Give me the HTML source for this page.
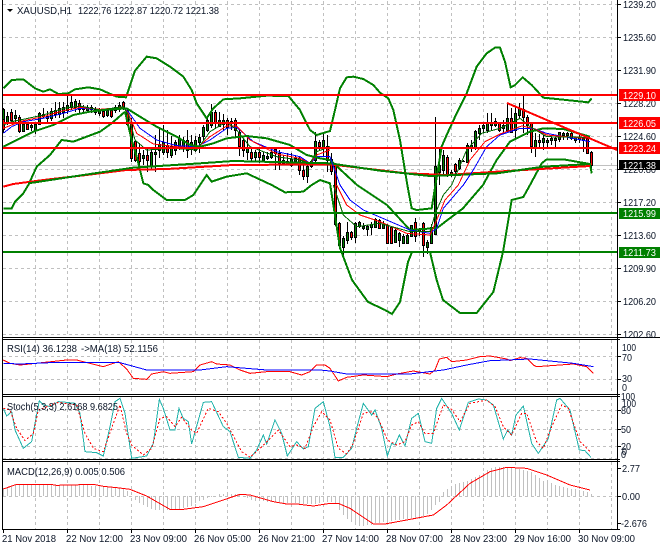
<!DOCTYPE html>
<html><head><meta charset="utf-8"><style>
html,body{margin:0;padding:0;background:#fff;width:660px;height:550px;overflow:hidden}
svg{display:block;position:absolute;left:0;top:0}
text{font-family:"Liberation Sans",sans-serif;font-size:10.5px;fill:#0a1426}
.lg{fill:none;stroke:#008000;stroke-width:2;vector-effect:non-scaling-stroke;shape-rendering:crispEdges}
.lr{fill:none;stroke:#f00;stroke-width:2;vector-effect:non-scaling-stroke;shape-rendering:crispEdges}
.t1{fill:none;stroke-width:1;vector-effect:non-scaling-stroke;shape-rendering:crispEdges}
</style></head><body>
<svg width="660" height="550" viewBox="0 0 660 550">
<rect width="660" height="550" fill="#fff"/>
<!-- grid -->
<path fill="none" stroke="#c0c0c0" stroke-dasharray="3 3" shape-rendering="crispEdges" d="M35.5 1V337M67.5 1V337M99.5 1V337M131.5 1V337M163.5 1V337M195.5 1V337M227.5 1V337M259.5 1V337M291.5 1V337M323.5 1V337M355.5 1V337M387.5 1V337M419.5 1V337M451.5 1V337M483.5 1V337M515.5 1V337M547.5 1V337M579.5 1V337M611.5 1V337
M35.5 340V394M67.5 340V394M99.5 340V394M131.5 340V394M163.5 340V394M195.5 340V394M227.5 340V394M259.5 340V394M291.5 340V394M323.5 340V394M355.5 340V394M387.5 340V394M419.5 340V394M451.5 340V394M483.5 340V394M515.5 340V394M547.5 340V394M579.5 340V394M611.5 340V394
M35.5 397V459M67.5 397V459M99.5 397V459M131.5 397V459M163.5 397V459M195.5 397V459M227.5 397V459M259.5 397V459M291.5 397V459M323.5 397V459M355.5 397V459M387.5 397V459M419.5 397V459M451.5 397V459M483.5 397V459M515.5 397V459M547.5 397V459M579.5 397V459M611.5 397V459
M35.5 462V529M67.5 462V529M99.5 462V529M131.5 462V529M163.5 462V529M195.5 462V529M227.5 462V529M259.5 462V529M291.5 462V529M323.5 462V529M355.5 462V529M387.5 462V529M419.5 462V529M451.5 462V529M483.5 462V529M515.5 462V529M547.5 462V529M579.5 462V529M611.5 462V529
M3 4.5H617M3 37.5H617M3 70.5H617M3 103.5H617M3 136.5H617M3 169.5H617M3 202.5H617M3 235.5H617M3 268.5H617M3 301.5H617M3 334.5H617M3 356.5H617M3 379.5H617M3 410.5H617M3 429.5H617M3 446.5H617M3 458.5H617M3 496.5H617"/>
<path d="M3 165.5H617" stroke="#c0c0c0" shape-rendering="crispEdges"/>
<!-- macd histogram -->
<path stroke="#c0c0c0" shape-rendering="crispEdges" fill="none" d="M3.5 496V488M7.5 496V487M11.5 496V486M15.5 496V485M19.5 496V485M23.5 496V485M27.5 496V485M31.5 496V485M35.5 496V485M39.5 496V485M43.5 496V485M47.5 496V485M51.5 496V485M55.5 496V485M59.5 496V485M63.5 496V485M67.5 496V485M71.5 496V485M75.5 496V485M79.5 496V485M83.5 496V485M87.5 496V485M91.5 496V486M95.5 496V486M99.5 496V486M103.5 496V487M107.5 496V487M111.5 496V487M115.5 496V488M119.5 496V488M123.5 496V489M127.5 496V491M131.5 496V497M135.5 496V500M139.5 496V503M143.5 496V505M147.5 496V507M151.5 496V509M155.5 496V510M159.5 496V510M163.5 496V510M167.5 496V510M171.5 496V510M175.5 496V510M179.5 496V509M183.5 496V508M187.5 496V507M191.5 496V506M195.5 496V503M199.5 496V501M203.5 496V500M207.5 496V498M211.5 496V497M219.5 496V494M223.5 496V494M227.5 496V494M231.5 496V494M235.5 496V494M239.5 496V495M243.5 496V497M247.5 496V498M251.5 496V500M255.5 496V501M259.5 496V501M263.5 496V501M267.5 496V502M271.5 496V502M275.5 496V502M279.5 496V502M283.5 496V503M287.5 496V503M291.5 496V503M295.5 496V503M299.5 496V504M303.5 496V504M307.5 496V504M311.5 496V504M315.5 496V504M319.5 496V503M323.5 496V502M327.5 496V502M331.5 496V502M335.5 496V503M339.5 496V510M343.5 496V515M347.5 496V519M351.5 496V522M355.5 496V525M359.5 496V526M363.5 496V526M367.5 496V525M371.5 496V525M375.5 496V523M379.5 496V523M383.5 496V522M387.5 496V522M391.5 496V521M395.5 496V520M399.5 496V520M403.5 496V519M407.5 496V519M411.5 496V518M415.5 496V518M419.5 496V517M423.5 496V516M427.5 496V514M431.5 496V510M435.5 496V505M439.5 496V502M443.5 496V492M447.5 496V489M451.5 496V486M455.5 496V484M459.5 496V483M463.5 496V482M467.5 496V481M471.5 496V479M475.5 496V477M479.5 496V475M483.5 496V473M487.5 496V470M491.5 496V468M495.5 496V467M499.5 496V467M503.5 496V467M507.5 496V467M511.5 496V467M515.5 496V468M519.5 496V469M523.5 496V470M527.5 496V471M531.5 496V472M535.5 496V475M539.5 496V478M543.5 496V481M547.5 496V482M551.5 496V483M555.5 496V485M559.5 496V486M563.5 496V487M567.5 496V488M571.5 496V489M575.5 496V489M579.5 496V490M583.5 496V491M587.5 496V492M591.5 496V494"/>
<!-- candle wicks -->
<path stroke="#000" fill="none" shape-rendering="crispEdges" d="M3.5 108V133M7.5 112V125M11.5 109V122M15.5 110V122M19.5 115V133M23.5 122V132M27.5 122V130M31.5 124V131M35.5 122V134M39.5 112V125M43.5 108V118M47.5 111V122M51.5 108V121M55.5 102V118M59.5 102V118M63.5 102V118M67.5 96V114M71.5 96V110M75.5 99V112M79.5 100V114M83.5 105V112M87.5 105V113M91.5 105V113M95.5 107V115M99.5 108V116M103.5 110V118M107.5 108V117M111.5 108V118M115.5 105V113M119.5 102V112M123.5 101V110M127.5 108V126M131.5 118V162M135.5 140V162M139.5 143V165M143.5 150V165M147.5 148V172M151.5 148V170M155.5 135V172M159.5 128V158M163.5 125V155M167.5 130V158M171.5 136V158M175.5 140V155M179.5 135V150M183.5 137V152M187.5 130V158M191.5 135V155M195.5 136V152M199.5 134V153M203.5 125V140M207.5 118V132M211.5 104V128M215.5 110V128M219.5 112V127M223.5 114V130M227.5 118V135M231.5 118V130M235.5 118V138M239.5 130V156M243.5 138V157M247.5 135V160M251.5 148V162M255.5 150V162M259.5 147V163M263.5 152V162M267.5 152V160M271.5 150V159M275.5 148V170M279.5 150V170M283.5 155V165M287.5 153V165M291.5 153V167M295.5 155V163M299.5 157V175M303.5 163V180M307.5 165V183M311.5 160V168M315.5 132V163M319.5 140V150M323.5 132V157M327.5 135V172M331.5 153V175M335.5 163V226M339.5 222V246M343.5 236V256M347.5 222V244M351.5 231V240M355.5 222V243M359.5 221V228M363.5 223V230M367.5 225V236M371.5 222V235M375.5 218V227M379.5 219V229M383.5 221V229M387.5 224V244M391.5 226V244M395.5 227V242M399.5 232V247M403.5 234V244M407.5 234V243M411.5 225V237M415.5 218V242M419.5 228V236M423.5 222V257M427.5 240V254M431.5 224V244M435.5 117V234M439.5 148V185M443.5 150V175M447.5 155V177M451.5 170V177M455.5 163V175M459.5 158V170M463.5 160V162M467.5 143V163M471.5 140V152M475.5 130V150M479.5 125V140M483.5 122V133M487.5 113V133M491.5 113V130M495.5 118V127M499.5 122V132M503.5 120V133M507.5 103V132M511.5 108V133M515.5 107V138M519.5 103V118M523.5 96V133M527.5 115V135M531.5 123V153M535.5 133V157M539.5 134V148M543.5 135V150M547.5 138V148M551.5 137V145M555.5 137V147M559.5 132V142M563.5 132V140M567.5 132V140M571.5 132V140M575.5 137V143M579.5 135V143M583.5 137V152M587.5 137V154M591.5 151V173"/>
<!-- green bodies -->
<path stroke="#000" fill="#008000" shape-rendering="crispEdges" d="M2.5 109.5h2v10h-2zM6.5 116.5h2v6h-2zM14.5 115.5h2v3h-2zM22.5 124.5h2v7h-2zM30.5 125.5h2v2h-2zM34.5 124.5h2v6h-2zM38.5 113.5h2v11h-2zM42.5 114.5h2v2h-2zM50.5 111.5h2v7h-2zM58.5 108.5h2v6h-2zM62.5 107.5h2v5h-2zM66.5 105.5h2v5h-2zM70.5 102.5h2v5h-2zM74.5 101.5h2v6h-2zM82.5 107.5h2v2h-2zM86.5 107.5h2v3h-2zM98.5 110.5h2v3h-2zM106.5 110.5h2v5h-2zM114.5 107.5h2v3h-2zM118.5 105.5h2v4h-2zM142.5 155.5h2v3h-2zM150.5 152.5h2v14h-2zM154.5 152.5h2v2h-2zM158.5 144.5h2v6h-2zM162.5 142.5h2v10h-2zM170.5 146.5h2v9h-2zM174.5 142.5h2v8h-2zM178.5 138.5h2v10h-2zM182.5 140.5h2v7h-2zM190.5 142.5h2v6h-2zM194.5 140.5h2v10h-2zM198.5 137.5h2v5h-2zM202.5 127.5h2v9h-2zM206.5 120.5h2v10h-2zM210.5 112.5h2v13h-2zM218.5 120.5h2v6h-2zM222.5 120.5h2v4h-2zM230.5 121.5h2v2h-2zM246.5 148.5h2v4h-2zM254.5 152.5h2v5h-2zM262.5 155.5h2v5h-2zM266.5 156.5h2v2h-2zM270.5 152.5h2v5h-2zM282.5 160.5h2v3h-2zM286.5 161.5h2v2h-2zM290.5 159.5h2v6h-2zM294.5 158.5h2v3h-2zM306.5 166.5h2v10h-2zM310.5 161.5h2v5h-2zM314.5 141.5h2v19h-2zM322.5 140.5h2v7h-2zM342.5 238.5h2v9h-2zM346.5 232.5h2v8h-2zM354.5 223.5h2v14h-2zM358.5 222.5h2v4h-2zM362.5 226.5h2v2h-2zM366.5 226.5h2v3h-2zM370.5 224.5h2v3h-2zM374.5 219.5h2v8h-2zM382.5 224.5h2v4h-2zM394.5 230.5h2v12h-2zM398.5 233.5h2v7h-2zM402.5 236.5h2v7h-2zM406.5 235.5h2v8h-2zM410.5 225.5h2v11h-2zM418.5 229.5h2v2h-2zM426.5 242.5h2v5h-2zM430.5 227.5h2v16h-2zM434.5 166.5h2v68h-2zM438.5 165.5h2v7h-2zM442.5 155.5h2v15h-2zM450.5 172.5h2v3h-2zM458.5 160.5h2v8h-2zM466.5 145.5h2v17h-2zM470.5 145.5h2v2h-2zM474.5 131.5h2v16h-2zM478.5 128.5h2v5h-2zM482.5 125.5h2v3h-2zM486.5 123.5h2v7h-2zM490.5 123.5h2v2h-2zM494.5 121.5h2v4h-2zM502.5 125.5h2v3h-2zM506.5 118.5h2v12h-2zM514.5 113.5h2v17h-2zM518.5 108.5h2v7h-2zM534.5 140.5h2v7h-2zM542.5 138.5h2v4h-2zM546.5 140.5h2v2h-2zM550.5 138.5h2v2h-2zM554.5 138.5h2v2h-2zM558.5 132.5h2v7h-2zM562.5 133.5h2v2h-2zM566.5 133.5h2v2h-2zM574.5 137.5h2v3h-2zM578.5 137.5h2v2h-2zM582.5 138.5h2v2h-2z"/>
<!-- red bodies -->
<path stroke="#000" fill="#f00" shape-rendering="crispEdges" d="M2.5 119.5h2v10h-2zM10.5 112.5h2v8h-2zM18.5 117.5h2v14h-2zM26.5 124.5h2v5h-2zM46.5 116.5h2v2h-2zM54.5 110.5h2v4h-2zM78.5 103.5h2v6h-2zM90.5 107.5h2v2h-2zM94.5 109.5h2v3h-2zM102.5 111.5h2v5h-2zM110.5 110.5h2v6h-2zM122.5 102.5h2v6h-2zM126.5 110.5h2v14h-2zM130.5 122.5h2v36h-2zM134.5 141.5h2v19h-2zM138.5 153.5h2v8h-2zM146.5 155.5h2v5h-2zM166.5 145.5h2v7h-2zM186.5 140.5h2v10h-2zM214.5 112.5h2v10h-2zM226.5 120.5h2v7h-2zM234.5 120.5h2v10h-2zM238.5 132.5h2v14h-2zM242.5 140.5h2v10h-2zM250.5 152.5h2v6h-2zM258.5 152.5h2v5h-2zM274.5 149.5h2v4h-2zM278.5 153.5h2v10h-2zM298.5 158.5h2v12h-2zM302.5 170.5h2v6h-2zM318.5 142.5h2v4h-2zM326.5 146.5h2v14h-2zM330.5 159.5h2v12h-2zM334.5 165.5h2v59h-2zM338.5 223.5h2v22h-2zM350.5 232.5h2v5h-2zM378.5 220.5h2v8h-2zM386.5 225.5h2v18h-2zM390.5 227.5h2v16h-2zM414.5 222.5h2v14h-2zM422.5 223.5h2v22h-2zM446.5 157.5h2v18h-2zM454.5 164.5h2v7h-2zM498.5 123.5h2v7h-2zM510.5 118.5h2v14h-2zM522.5 109.5h2v8h-2zM526.5 117.5h2v8h-2zM530.5 123.5h2v23h-2zM538.5 140.5h2v2h-2zM570.5 133.5h2v5h-2zM586.5 138.5h2v15h-2zM590.5 152.5h2v13h-2z"/>
<path stroke="#000" shape-rendering="crispEdges" d="M462 161.5h3"/>
<!-- thin MAs and bands, 3x coordinates -->
<g transform="scale(.33333)">
<polyline class="t1" stroke="#00f" points="10,400 35,380 70,365 130,355 190,340 240,325 300,328 370,325 385,335 420,385 470,420 530,437 590,440 630,420 680,385 710,382 760,425 830,455 900,470 930,490 950,470 990,470"/>
<polyline class="t1" stroke="#f00" points="10,385 35,375 70,362 130,350 190,332 240,322 300,328 370,322 385,340 410,400 460,432 530,440 590,445 630,410 680,378 710,378 750,420 830,462 900,475 930,490 950,465 990,450"/>
<polyline class="t1" stroke="#060" points="10,375 35,365 70,358 130,345 190,325 240,318 300,330 370,320 385,345 405,420 440,450 520,445 590,450 630,395 680,365 710,390 750,440 830,470 900,480 930,490 950,455 990,440"/>
<polyline class="lg" points="10,265 35,240 70,238 105,265 130,275 150,268 175,282 205,280 225,268 265,262 300,268 320,277 350,290 378,292 405,212 440,170 470,175 510,200 550,230 575,270 590,310 620,355 640,325 670,298 720,295 800,287 865,288 900,330 930,390 950,405 990,393 1005,330 1020,265 1040,232 1060,230 1090,237 1120,255 1140,278 1165,295 1180,330 1200,420 1222,555 1235,625 1250,630 1295,625 1325,440 1340,405 1370,340 1400,280 1430,200 1460,160 1485,143 1500,143 1515,185 1532,262 1545,255 1568,232 1595,255 1630,293 1670,297 1765,307 1775,295"/>
<polyline class="lg" points="10,440 60,415 100,395 160,375 220,345 270,335 310,330 380,325 420,350 470,380 530,410 570,435 600,440 640,430 680,415 740,408 800,415 870,435 920,465 960,475 990,480 1071,555 1161,615 1230,690 1311,684 1389,625 1449,555 1490,480 1530,425 1590,395 1630,385 1690,387 1770,410"/>
<polyline class="lg" points="10,625 35,625 45,605 70,580 85,555 110,500 150,465 185,420 220,425 260,410 300,395 335,370 375,335"/>
<polyline class="lg" points="375,335 395,420 410,470 430,550 445,555 460,570 500,600 555,600 580,585 600,555 620,525 635,545 680,530 740,520 815,555 855,577 910,575 935,555 960,540 990,550 1020,744 1056,840 1104,906 1155,930 1176,942 1200,906 1224,786 1236,756 1290,756 1310,840 1329,900 1380,939 1430,939 1480,876 1509,756 1535,600 1570,591 1590,555 1625,490 1640,478 1690,478 1770,492 1775,520"/>
<polyline class="lr" points="10,560 40,552 130,540 260,525 380,510 500,507 700,495 990,493 1220,520 1340,525 1490,515 1770,498"/>
<polyline class="lg" points="85,550 250,525 400,503 600,490 700,483 990,490 1140,512 1290,528 1490,520 1630,500 1770,492"/>
</g>
<g transform="translate(330,185) scale(.33333)">
<polyline class="t1" stroke="#00f" points="30,0 60,45 100,75 170,105 240,135 300,145 320,130 340,70 400,0"/>
<polyline class="t1" stroke="#f00" points="20,0 50,60 90,90 150,110 230,145 300,150 318,110 345,45 385,0"/>
<polyline class="t1" stroke="#060" points="10,0 40,90 80,125 150,115 240,140 300,140 316,85 340,30 365,0"/>
</g>
<g transform="translate(330,0) scale(.33333)">
<polyline class="t1" stroke="#00f" points="0,470 30,555"/>
<polyline class="t1" stroke="#00f" points="400,555 430,510 470,440 510,405 570,385 610,385 650,400 780,425"/>
<polyline class="t1" stroke="#f00" points="385,555 420,480 465,425 515,400 575,378 610,385 650,405 770,415"/>
<polyline class="t1" stroke="#060" points="365,555 410,450 455,400 510,385 570,355 600,380 650,410 770,412"/>
</g>
<!-- level lines -->
<path stroke="#f00" stroke-width="2" fill="none" shape-rendering="crispEdges" d="M3 95H617M3 123H617M3 148H617"/>
<path stroke="#008000" stroke-width="2" fill="none" shape-rendering="crispEdges" d="M3 213H617M3 252H617"/>
<path stroke="#f00" stroke-width="2" fill="none" shape-rendering="crispEdges" d="M507 103L617 150"/>
<!-- RSI -->
<g transform="translate(0,185) scale(.33333)">
<polyline class="t1" stroke="#f00" points="10,525 30,535 60,540 80,538 135,532 200,525 230,525 270,535 310,545 355,530 380,552 400,580 440,583 455,567 490,560 510,565 580,560 600,540 635,530 650,537 690,540 720,555 750,565 800,560 870,560 905,570 930,560 950,540 975,540 990,550 1015,588 1040,577 1090,570 1160,575 1190,567 1240,558 1290,567 1305,555 1318,522 1340,517 1355,530 1400,525 1440,515 1470,513 1520,522 1530,527 1560,518 1580,520 1600,540 1610,545 1680,540 1720,537 1760,545 1780,565"/>
<polyline class="t1" stroke="#00f" points="10,535 60,537 150,533 360,533 440,555 600,555 680,545 800,555 960,555 990,558 1040,567 1230,567 1330,555 1400,540 1470,527 1520,525 1590,522 1720,535 1780,545"/>
</g>
<!-- stoch and macd -->
<g transform="translate(0,370) scale(.33333)">
<polyline class="t1" stroke="#20b2aa" points="10,115 20,138 35,125 45,180 70,235 95,215 105,160 118,92 130,105 150,110 175,95 200,97 225,100 240,130 255,245 290,248 310,258 330,170 345,95 360,85 375,130 395,265 440,258 460,220 478,88 490,115 510,180 525,180 537,115 550,145 565,155 575,222 610,97 635,95 670,170 690,185 715,262 750,265 770,240 790,195 800,222 825,150 845,190 862,258 890,215 910,237 925,230 945,115 970,95 990,170 1005,262 1030,262 1055,235 1070,175 1090,100 1115,135 1125,120 1145,175 1162,258 1175,220 1185,225 1198,195 1215,228 1235,145 1255,130 1275,215 1295,220 1310,115 1325,85 1355,130 1378,180 1405,97 1435,87 1460,90 1480,105 1510,207 1523,180 1535,195 1548,135 1570,108 1595,220 1615,250 1645,205 1670,90 1680,85 1710,120 1738,240 1755,242 1773,262"/>
<polyline class="t1" stroke="#f00" stroke-dasharray="2 2" style="vector-effect:non-scaling-stroke" points="10,115 30,120 50,175 75,212 100,190 115,120 175,97 230,105 255,190 280,235 310,245 340,160 360,105 380,190 395,225 430,255 455,235 480,145 500,140 525,170 545,142 575,180 590,190 625,115 655,125 680,160 725,245 750,262 780,235 810,205 835,180 870,230 890,225 915,235 940,170 965,125 990,150 1015,235 1040,252 1060,220 1090,130 1115,125 1135,145 1162,210 1190,225 1215,215 1235,165 1255,155 1275,190 1300,190 1330,105 1355,118 1380,155 1410,100 1460,90 1485,110 1510,170 1535,195 1565,130 1580,130 1610,215 1630,235 1655,170 1685,105 1705,115 1740,215 1770,245"/>
<polyline class="t1" stroke="#f00" points="10,357 50,343 150,343 170,346 210,345 280,343 310,349 350,353 390,358 440,378 510,418 550,418 610,410 720,373 750,375 820,395 860,402 890,402 940,408 990,400 1015,400 1050,415 1120,462 1155,462 1220,450 1300,435 1340,405 1410,340 1470,305 1520,292 1580,295 1640,315 1710,345 1770,360"/>
</g>
<!-- borders -->
<path stroke="#000" fill="none" shape-rendering="crispEdges" d="M2.5 0V529.5M617.5 0V529.5M2 337.5H660M2 339.5H620M2 394.5H620M2 396.5H620M2 459.5H620M2 461.5H620M2 529.5H620"/>
<path stroke="#000" fill="none" shape-rendering="crispEdges" d="M617 4.5h4M617 37.5h4M617 70.5h4M617 103.5h4M617 136.5h4M617 169.5h4M617 202.5h4M617 235.5h4M617 268.5h4M617 301.5h4M617 334.5h4M617 356.5h4M617 379.5h4M617 410.5h4M617 429.5h4M617 446.5h4M617 468.5h4M617 496.5h4M617 523.5h4M3.5 530v3M67.5 530v3M131.5 530v3M195.5 530v3M259.5 530v3M323.5 530v3M387.5 530v3M451.5 530v3M515.5 530v3M579.5 530v3"/>
<path d="M7 9h6l-3 3z" fill="#000"/>
<!-- titles -->
<text lengthAdjust="spacingAndGlyphs" x="17" y="14" textLength="55">XAUUSD,H1</text>
<text lengthAdjust="spacingAndGlyphs" x="78" y="14" textLength="141">1222.76 1222.87 1220.72 1221.38</text>
<text lengthAdjust="spacingAndGlyphs" x="7" y="352" textLength="70">RSI(14) 36.1238</text>
<text lengthAdjust="spacingAndGlyphs" x="81" y="352" textLength="77">-&gt;MA(18) 52.1156</text>
<text lengthAdjust="spacingAndGlyphs" x="7" y="410" textLength="111">Stoch(5,3,3) 2.6168 9.6825</text>
<text lengthAdjust="spacingAndGlyphs" x="7" y="475" textLength="118">MACD(12,26,9) 0.005 0.506</text>
<!-- price axis -->
<text lengthAdjust="spacingAndGlyphs" x="623" y="8" textLength="33">1239.20</text>
<text lengthAdjust="spacingAndGlyphs" x="623" y="41" textLength="33">1235.60</text>
<text lengthAdjust="spacingAndGlyphs" x="623" y="74" textLength="33">1231.90</text>
<text lengthAdjust="spacingAndGlyphs" x="623" y="107" textLength="33">1228.20</text>
<text lengthAdjust="spacingAndGlyphs" x="623" y="140" textLength="33">1224.60</text>
<text lengthAdjust="spacingAndGlyphs" x="623" y="173" textLength="33">1220.80</text>
<text lengthAdjust="spacingAndGlyphs" x="623" y="206" textLength="33">1217.20</text>
<text lengthAdjust="spacingAndGlyphs" x="623" y="239" textLength="33">1213.60</text>
<text lengthAdjust="spacingAndGlyphs" x="623" y="272" textLength="33">1209.90</text>
<text lengthAdjust="spacingAndGlyphs" x="623" y="305" textLength="33">1206.20</text>
<text lengthAdjust="spacingAndGlyphs" x="623" y="338" textLength="33">1202.60</text>
<rect x="619" y="89" width="41" height="12" fill="#f00"/>
<text lengthAdjust="spacingAndGlyphs" x="623" y="99" textLength="33" style="fill:#fff">1229.10</text>
<rect x="619" y="117" width="41" height="12" fill="#f00"/>
<text lengthAdjust="spacingAndGlyphs" x="623" y="127" textLength="33" style="fill:#fff">1226.05</text>
<rect x="619" y="142" width="41" height="12" fill="#f00"/>
<text lengthAdjust="spacingAndGlyphs" x="623" y="152" textLength="33" style="fill:#fff">1223.24</text>
<rect x="619" y="160" width="41" height="10" fill="#000"/>
<text lengthAdjust="spacingAndGlyphs" x="623" y="169" textLength="33" style="fill:#fff">1221.38</text>
<rect x="619" y="208" width="41" height="11" fill="#008000"/>
<text lengthAdjust="spacingAndGlyphs" x="623" y="217" textLength="33" style="fill:#fff">1215.99</text>
<rect x="619" y="247" width="41" height="11" fill="#008000"/>
<text lengthAdjust="spacingAndGlyphs" x="623" y="256" textLength="33" style="fill:#fff">1211.73</text>
<!-- subpanel axis -->
<text lengthAdjust="spacingAndGlyphs" x="622" y="351" textLength="14">100</text>
<text lengthAdjust="spacingAndGlyphs" x="622" y="361" textLength="10">70</text>
<text lengthAdjust="spacingAndGlyphs" x="622" y="382" textLength="10">30</text>
<text lengthAdjust="spacingAndGlyphs" x="622" y="391" textLength="5">0</text>
<text lengthAdjust="spacingAndGlyphs" x="621" y="400" textLength="14">100</text>
<text lengthAdjust="spacingAndGlyphs" x="622" y="407" textLength="14">100</text>
<text lengthAdjust="spacingAndGlyphs" x="621" y="414" textLength="10">80</text>
<text lengthAdjust="spacingAndGlyphs" x="621" y="433" textLength="10">50</text>
<text lengthAdjust="spacingAndGlyphs" x="621" y="450" textLength="10">20</text>
<text lengthAdjust="spacingAndGlyphs" x="622" y="455" textLength="5">0</text>
<text lengthAdjust="spacingAndGlyphs" x="621" y="458" textLength="5">0</text>
<text lengthAdjust="spacingAndGlyphs" x="622" y="472" textLength="18">2.77</text>
<text lengthAdjust="spacingAndGlyphs" x="622" y="500" textLength="18">0.00</text>
<text lengthAdjust="spacingAndGlyphs" x="621" y="527" textLength="26">-2.676</text>
<!-- time axis -->
<text lengthAdjust="spacingAndGlyphs" x="2" y="542" textLength="54">21 Nov 2018</text>
<text lengthAdjust="spacingAndGlyphs" x="66" y="542" textLength="57">22 Nov 12:00</text>
<text lengthAdjust="spacingAndGlyphs" x="130" y="542" textLength="57">23 Nov 09:00</text>
<text lengthAdjust="spacingAndGlyphs" x="194" y="542" textLength="57">26 Nov 05:00</text>
<text lengthAdjust="spacingAndGlyphs" x="258" y="542" textLength="57">26 Nov 21:00</text>
<text lengthAdjust="spacingAndGlyphs" x="322" y="542" textLength="57">27 Nov 14:00</text>
<text lengthAdjust="spacingAndGlyphs" x="386" y="542" textLength="57">28 Nov 07:00</text>
<text lengthAdjust="spacingAndGlyphs" x="450" y="542" textLength="57">28 Nov 23:00</text>
<text lengthAdjust="spacingAndGlyphs" x="514" y="542" textLength="57">29 Nov 16:00</text>
<text lengthAdjust="spacingAndGlyphs" x="578" y="542" textLength="57">30 Nov 09:00</text>
</svg>
</body></html>
